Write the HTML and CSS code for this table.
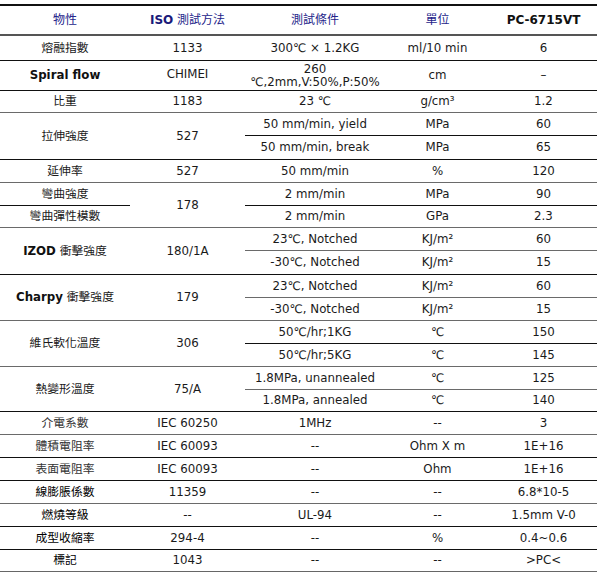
FILE: index.html
```html
<!DOCTYPE html>
<html lang="zh-Hant">
<head>
<meta charset="utf-8">
<link rel="stylesheet" href="styles.css">
</head>
<body>
<table class="spec">
  <colgroup>
    <col class="c1"><col class="c2"><col class="c3"><col class="c4"><col class="c5">
  </colgroup>
  <thead>
    <tr class="head">
      <th class="blue">物性</th>
      <th class="blue"><b class="latin">ISO</b> 測試方法</th>
      <th class="blue">測試條件</th>
      <th class="blue">單位</th>
      <th class="grade">PC-6715VT</th>
    </tr>
  </thead>
  <tbody>
    <tr class="r25 dark"><td>熔融指數</td><td>1133</td><td>300℃ × 1.2KG</td><td>ml/10 min</td><td>6</td></tr>
    <tr class="r28 dark"><td><b>Spiral flow</b></td><td class="up">CHIMEI</td><td class="two">260<br>℃,2mm,V:50%,P:50%</td><td>cm</td><td>–</td></tr>
    <tr class="r22 grey"><td>比重</td><td>1183</td><td>23 ℃</td><td>g/cm³</td><td>1.2</td></tr>
    <tr class="r23 dark"><td rowspan="2" class="dark">拉伸強度</td><td rowspan="2" class="dark">527</td><td>50 mm/min, yield</td><td>MPa</td><td>60</td></tr>
    <tr class="r24 dark"><td>50 mm/min, break</td><td>MPa</td><td>65</td></tr>
    <tr class="r23 grey"><td>延伸率</td><td>527</td><td>50 mm/min</td><td>%</td><td>120</td></tr>
    <tr class="r23 dark"><td>彎曲強度</td><td rowspan="2" class="grey">178</td><td>2 mm/min</td><td>MPa</td><td>90</td></tr>
    <tr class="r22 grey"><td>彎曲彈性模數</td><td>2 mm/min</td><td>GPa</td><td>2.3</td></tr>
    <tr class="r23 grey"><td rowspan="2" class="dark"><b>IZOD</b> 衝擊強度</td><td rowspan="2" class="dark">180/1A</td><td>23℃, Notched</td><td>KJ/m²</td><td>60</td></tr>
    <tr class="r24 dark"><td>-30℃, Notched</td><td>KJ/m²</td><td>15</td></tr>
    <tr class="r23 grey"><td rowspan="2" class="grey"><b>Charpy</b> 衝擊強度</td><td rowspan="2" class="grey">179</td><td>23℃, Notched</td><td>KJ/m²</td><td>60</td></tr>
    <tr class="r23 grey"><td>-30℃, Notched</td><td>KJ/m²</td><td>15</td></tr>
    <tr class="r23 dark"><td rowspan="2" class="grey">維氏軟化溫度</td><td rowspan="2" class="grey">306</td><td>50℃/hr;1KG</td><td>℃</td><td>150</td></tr>
    <tr class="r23 grey"><td>50℃/hr;5KG</td><td>℃</td><td>145</td></tr>
    <tr class="r23 grey"><td rowspan="2" class="dark">熱變形溫度</td><td rowspan="2" class="dark">75/A</td><td>1.8MPa, unannealed</td><td>℃</td><td>125</td></tr>
    <tr class="r22 dark"><td>1.8MPa, annealed</td><td>℃</td><td>140</td></tr>
    <tr class="r23 grey"><td class="light">介電系數</td><td>IEC 60250</td><td>1MHz</td><td>--</td><td>3</td></tr>
    <tr class="r23 dark"><td class="light">體積電阻率</td><td>IEC 60093</td><td>--</td><td>Ohm X m</td><td>1E+16</td></tr>
    <tr class="r23 dark"><td class="light">表面電阻率</td><td>IEC 60093</td><td>--</td><td>Ohm</td><td>1E+16</td></tr>
    <tr class="r23 grey"><td class="strong">線膨脹係數</td><td>11359</td><td>--</td><td>--</td><td>6.8*10-5</td></tr>
    <tr class="r23 dark"><td class="strong">燃燒等級</td><td>--</td><td>UL-94</td><td>--</td><td>1.5mm V-0</td></tr>
    <tr class="r23 dark"><td class="strong">成型收縮率</td><td>294-4</td><td>--</td><td>%</td><td>0.4~0.6</td></tr>
    <tr class="r22 last"><td class="strong">標記</td><td>1043</td><td>--</td><td>--</td><td>&gt;PC&lt;</td></tr>
  </tbody>
</table>
</body>
</html>
```

FILE: styles.css
```css
html, body {
  margin: 0;
  padding: 0;
  background: #ffffff;
}

body {
  padding-top: 4px;
  font-family: "DejaVu Sans", Verdana, "Noto Sans CJK TC", sans-serif;
  font-size: 11.8px;
  color: #1a1a1a;
}

.spec {
  width: 597px;
  border-collapse: collapse;
  table-layout: fixed;
  border-top: 2px solid #111;
}

.c1 { width: 130px; }
.c2 { width: 115px; }
.c3 { width: 140px; }
.c4 { width: 105px; }
.c5 { width: 107px; }

.spec th,
.spec td {
  padding: 0;
  text-align: center;
  vertical-align: middle;
  line-height: 13px;
  white-space: nowrap;
  overflow: visible;
}

.spec td {
  font-weight: normal;
}

.head th {
  height: 28px;
  font-weight: normal;
  font-size: 12px;
  border-bottom: 2px solid #555;
}

.head th.blue {
  color: #24248a;
}

.head th.grade {
  color: #111;
  font-weight: bold;
}

.spec b {
  font-weight: bold;
  color: #111;
}

.head .latin {
  color: #1a1a7a;
}

tr.dark > td { border-bottom: 1px solid #111; }
tr.grey > td { border-bottom: 1px solid #6a6a6a; }
td.dark { border-bottom: 1px solid #111 !important; }
td.grey { border-bottom: 1px solid #6a6a6a !important; }
tr.last > td { border-bottom: 3px double #666; }

.r22 > td { height: 21px; }
.r23 > td { height: 22px; }
.r24 > td { height: 23px; }
.r25 > td { height: 24px; }
.r28 > td { height: 27px; }

td.up {
  padding-bottom: 2px;
}

td.two {
  line-height: 13px;
  padding-top: 1px;
}

td.light {
  color: #333;
}

td.strong {
  color: #000;
}
```
